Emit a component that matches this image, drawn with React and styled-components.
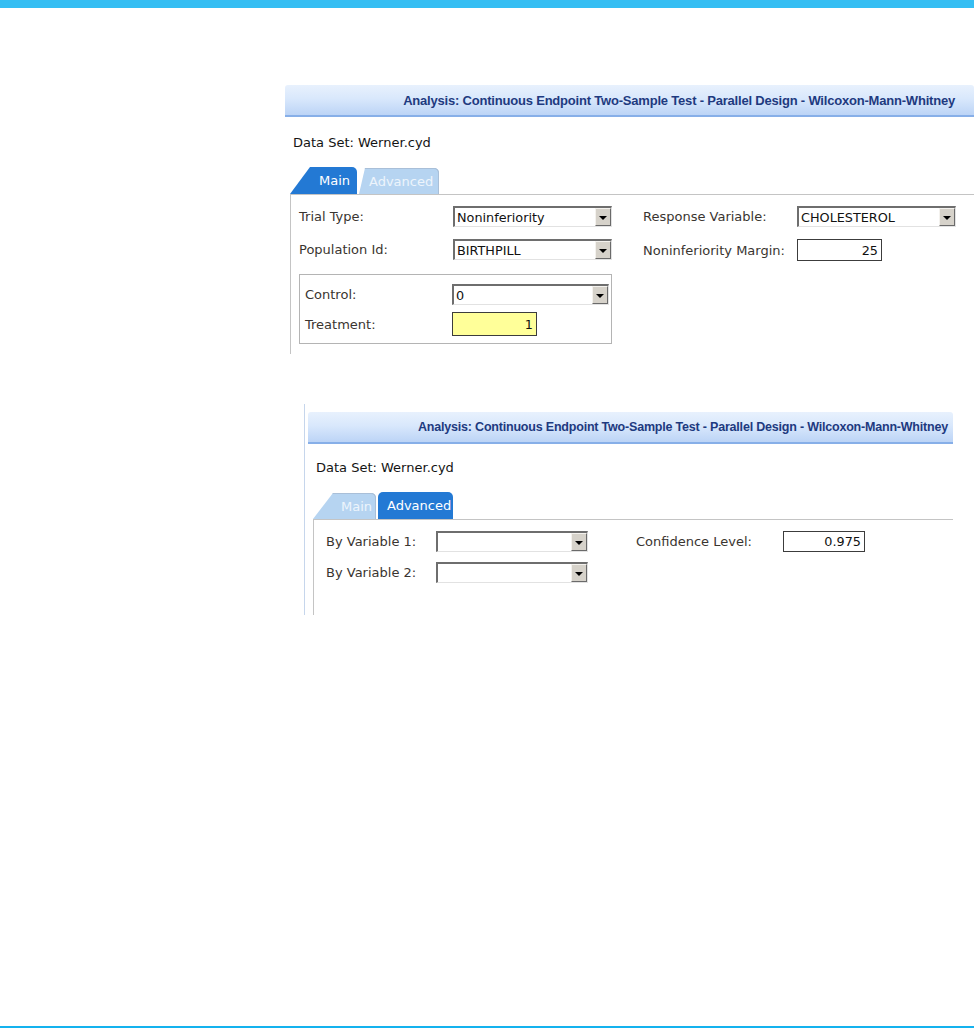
import React from "react";
import styled, { createGlobalStyle, css } from "styled-components";

const GlobalStyle = createGlobalStyle`
  html, body {
    margin: 0;
    padding: 0;
    background: #ffffff;
    overflow: hidden;
  }
  body {
    font-family: "DejaVu Sans", Verdana, sans-serif;
    color: #222;
  }
`;

const TITLE =
  "Analysis: Continuous Endpoint Two-Sample Test - Parallel Design - Wilcoxon-Mann-Whitney";

function Select({ value, width }) {
  return (
    <SelectBox $width={width}>
      <SelectValue>{value}</SelectValue>
      <ArrowBtn>
        <Arrow />
      </ArrowBtn>
    </SelectBox>
  );
}

function Tab({ active, slant, width, pad, children }) {
  return (
    <TabItem $active={active} $slant={slant} $width={width} $pad={pad}>
      {children}
    </TabItem>
  );
}

function App() {
  return (
    <>
      <GlobalStyle />
      <Page>
        <TopBar />
        <Content>
          {/* first capture: Main tab */}
          <Shot $left={285} $top={77} $width={689}>
            <Header $padRight={19} $size={13}>
              {TITLE}
            </Header>
            <DataSet $left={8} $top={17}>
              Data Set: Werner.cyd
            </DataSet>
            <TabStrip $left={5}>
              <Tab active slant={20} width={67} pad={29}>
                Main
              </Tab>
              <Tab slant={6} width={80} pad={10}>
                Advanced
              </Tab>
            </TabStrip>
            <TabBody $left={5} $height={160} $pad="11px 0 0 8px">
              <Columns $gap={31}>
                <Column $gap={12}>
                  <Field>
                    <Label $width={154}>Trial Type:</Label>
                    <Select value="Noninferiority" width={159} />
                  </Field>
                  <Field>
                    <Label $width={154}>Population Id:</Label>
                    <Select value="BIRTHPILL" width={159} />
                  </Field>
                  <GroupBox>
                    <Field>
                      <Label $width={147}>Control:</Label>
                      <Select value="0" width={157} />
                    </Field>
                    <Field>
                      <Label $width={147}>Treatment:</Label>
                      <NumInput $width={85} $height={24} $yellow>
                        1
                      </NumInput>
                    </Field>
                  </GroupBox>
                </Column>
                <Column $gap={12}>
                  <Field>
                    <Label $width={154}>Response Variable:</Label>
                    <Select value="CHOLESTEROL" width={159} />
                  </Field>
                  <Field>
                    <Label $width={154}>Noninferiority Margin:</Label>
                    <NumInput $width={85} $height={22}>
                      25
                    </NumInput>
                  </Field>
                </Column>
              </Columns>
            </TabBody>
          </Shot>

          {/* second capture: Advanced tab */}
          <Shot $left={304} $top={50} $width={645} $framed>
            <Header $padRight={5} $top={8} $size={12.5}>
              {TITLE}
            </Header>
            <DataSet $left={8} $top={15}>
              Data Set: Werner.cyd
            </DataSet>
            <TabStrip $left={5}>
              <Tab slant={20} width={63} pad={28}>
                Main
              </Tab>
              <Tab active slant={0} width={75} pad={9}>
                Advanced
              </Tab>
            </TabStrip>
            <TabBody $left={5} $height={96} $pad="11px 0 0 12px">
              <Columns $gap={48}>
                <Column $gap={10}>
                  <Field>
                    <Label $width={110}>By Variable 1:</Label>
                    <Select value="" width={152} />
                  </Field>
                  <Field>
                    <Label $width={110}>By Variable 2:</Label>
                    <Select value="" width={152} />
                  </Field>
                </Column>
                <Column $gap={10}>
                  <Field>
                    <Label $width={147}>Confidence Level:</Label>
                    <NumInput $width={82} $height={21}>
                      0.975
                    </NumInput>
                  </Field>
                </Column>
              </Columns>
            </TabBody>
          </Shot>
        </Content>
        <BottomLine />
      </Page>
    </>
  );
}

export default App;

const Page = styled.div`
  width: 974px;
  height: 1029px;
  display: flex;
  flex-direction: column;
  overflow: hidden;
`;

const TopBar = styled.div`
  height: 8px;
  background: #35bef3;
  flex-shrink: 0;
`;

const Content = styled.div`
  flex: 1;
  display: flex;
  flex-direction: column;
  align-items: flex-start;
`;

const BottomLine = styled.div`
  height: 2px;
  margin-bottom: 1px;
  background: #14b2ee;
  flex-shrink: 0;
`;

const Shot = styled.div`
  margin-left: ${(p) => p.$left}px;
  margin-top: ${(p) => p.$top}px;
  width: ${(p) => p.$width}px;
  display: flex;
  flex-direction: column;
  ${(p) =>
    p.$framed &&
    css`
      border-left: 1px solid #c6d6ec;
      padding-left: 3px;
    `}
`;

const Header = styled.div`
  margin-top: ${(p) => p.$top || 0}px;
  height: 30px;
  border-radius: 3px 3px 0 0;
  background: linear-gradient(#e8f1fd 0%, #d9e8fc 45%, #bcd4f6 100%);
  border-bottom: 2px solid #87afe8;
  display: flex;
  align-items: center;
  justify-content: flex-end;
  padding-right: ${(p) => p.$padRight}px;
  font-family: "Liberation Sans", Arial, sans-serif;
  font-weight: 700;
  font-size: ${(p) => p.$size}px;
  letter-spacing: -0.2px;
  color: #1e3a80;
  white-space: nowrap;
`;

const DataSet = styled.div`
  margin: ${(p) => p.$top}px 0 0 ${(p) => p.$left}px;
  height: 17px;
  line-height: 17px;
  font-size: 13px;
  color: #141414;
`;

const TabStrip = styled.div`
  margin: 16px 0 0 ${(p) => p.$left}px;
  display: flex;
  align-items: flex-end;
  gap: 2px;
  height: 27px;
`;

const TabItem = styled.div`
  width: ${(p) => p.$width}px;
  height: ${(p) => (p.$active ? 27 : 26)}px;
  box-sizing: border-box;
  padding-left: ${(p) => p.$pad}px;
  display: flex;
  align-items: center;
  font-size: 13px;
  white-space: nowrap;
  border-radius: 5px 5px 0 0;
  clip-path: ${(p) =>
    p.$slant
      ? `polygon(0 100%, ${p.$slant}px 0, 100% 0, 100% 100%)`
      : "none"};
  ${(p) =>
    p.$active
      ? css`
          background: #2379d4;
          color: #ffffff;
        `
      : css`
          background: #b6d4f1;
          color: #edf4fc;
          box-shadow: inset 0 1px 0 #a9bfd8, inset -1px 0 0 #a9bfd8;
        `}
`;

const TabBody = styled.div`
  margin-left: ${(p) => p.$left}px;
  height: ${(p) => p.$height}px;
  box-sizing: border-box;
  border-top: 1px solid #c4c4c4;
  border-left: 1px solid #c4c4c4;
  padding: ${(p) => p.$pad};
`;

const Columns = styled.div`
  display: flex;
  gap: ${(p) => p.$gap}px;
  align-items: flex-start;
`;

const Column = styled.div`
  display: flex;
  flex-direction: column;
  gap: ${(p) => p.$gap}px;
`;

const GroupBox = styled.div`
  margin-top: 2px;
  width: 313px;
  box-sizing: border-box;
  border: 1px solid #b4b4b4;
  padding: 9px 0 7px 5px;
  display: flex;
  flex-direction: column;
  gap: 7px;
`;

const Field = styled.div`
  display: flex;
  align-items: center;
`;

const Label = styled.div`
  width: ${(p) => p.$width}px;
  flex-shrink: 0;
  font-size: 13px;
  color: #3a3530;
  white-space: nowrap;
`;

const SelectBox = styled.div`
  width: ${(p) => p.$width}px;
  height: 21px;
  box-sizing: border-box;
  display: flex;
  align-items: stretch;
  background: #ffffff;
  border-top: 2px solid #6e6e6e;
  border-left: 2px solid #6e6e6e;
  border-right: 1px solid #e2e2e2;
  border-bottom: 1px solid #e2e2e2;
`;

const SelectValue = styled.div`
  flex: 1;
  padding-left: 2px;
  display: flex;
  align-items: center;
  font-size: 12.8px;
  color: #111;
  overflow: hidden;
  white-space: nowrap;
`;

const ArrowBtn = styled.div`
  width: 16px;
  box-sizing: border-box;
  background: #d6d2ca;
  border-top: 1px solid #f4f2ee;
  border-left: 1px solid #f4f2ee;
  border-right: 1px solid #6a6a6a;
  border-bottom: 1px solid #6a6a6a;
  display: flex;
  align-items: center;
  justify-content: center;
`;

const Arrow = styled.span`
  width: 0;
  height: 0;
  border-left: 4px solid transparent;
  border-right: 4px solid transparent;
  border-top: 4px solid #000;
  margin-top: 1px;
`;

const NumInput = styled.div`
  width: ${(p) => p.$width}px;
  height: ${(p) => p.$height}px;
  box-sizing: border-box;
  border: 1px solid #3c3c3c;
  background: ${(p) => (p.$yellow ? "#ffff99" : "#ffffff")};
  display: flex;
  align-items: center;
  justify-content: flex-end;
  padding-right: 3px;
  font-size: 12.8px;
  color: #111;
`;
